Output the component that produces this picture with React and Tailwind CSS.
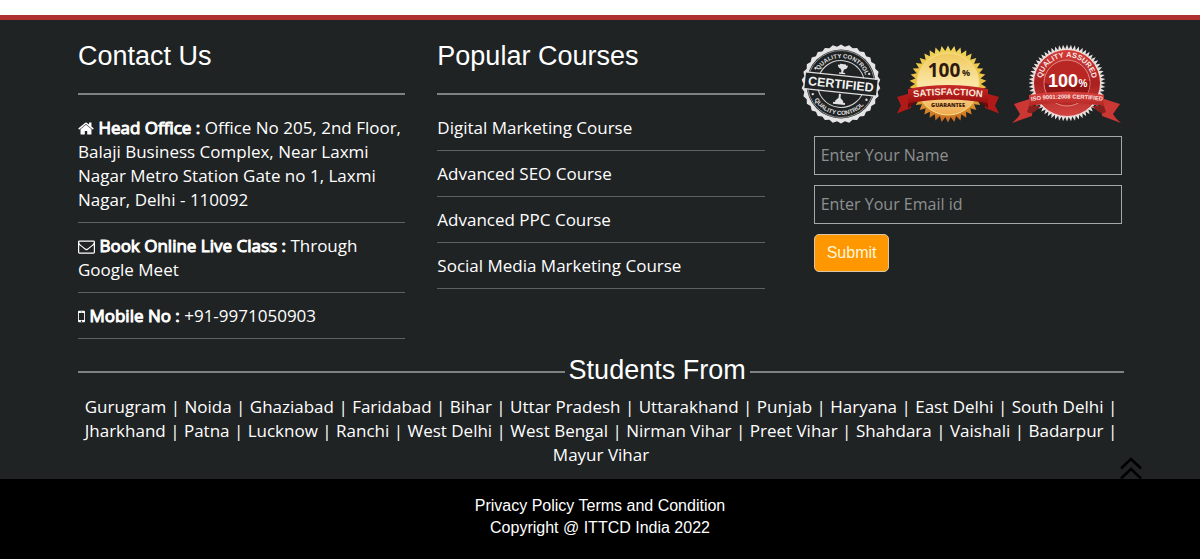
import { useId } from 'react'

const courses = [
  'Digital Marketing Course',
  'Advanced SEO Course',
  'Advanced PPC Course',
  'Social Media Marketing Course',
]

const places = [
  'Gurugram', 'Noida', 'Ghaziabad', 'Faridabad', 'Bihar', 'Uttar Pradesh', 'Uttarakhand',
  'Punjab', 'Haryana', 'East Delhi', 'South Delhi', 'Jharkhand', 'Patna', 'Lucknow', 'Ranchi',
  'West Delhi', 'West Bengal', 'Nirman Vihar', 'Preet Vihar', 'Shahdara', 'Vaishali',
  'Badarpur', 'Mayur Vihar',
]

// points of a toothed circle, used for the seal edges
function burst(cx, cy, outer, inner, teeth) {
  const points = []
  for (let i = 0; i < teeth * 2; i++) {
    const r = i % 2 ? inner : outer
    const a = (Math.PI * i) / teeth - Math.PI / 2
    points.push(`${(cx + r * Math.cos(a)).toFixed(2)},${(cy + r * Math.sin(a)).toFixed(2)}`)
  }
  return points.join(' ')
}

function HomeIcon() {
  return (
    <svg className="inline h-[17px] w-4 align-[-3px]" viewBox="64 0 1664 1792" fill="currentColor" aria-hidden="true">
      <path d="M1472 992v480q0 26-19 45t-45 19h-384v-384h-256v384h-384q-26 0-45-19t-19-45v-480q0-1 .5-3t.5-3l575-474 575 474q1 2 1 6zm223-69l-62 74q-8 9-21 11h-3q-13 0-21-7l-692-577-692 577q-12 8-24 7-13-2-21-11l-62-74q-8-10-7-23.5t11-21.5l719-599q32-26 76-26t76 26l244 204v-195q0-14 9-23t23-9h192q14 0 23 9t9 23v408l219 182q10 8 11 21.5t-7 23.5z" />
    </svg>
  )
}

function EnvelopeIcon() {
  return (
    <svg className="inline h-[17px] w-[17px] align-[-3px]" viewBox="0 0 1792 1792" fill="currentColor" aria-hidden="true">
      <path d="M1664 1504v-768q-32 36-69 66-268 206-426 338-51 43-83 67t-86.5 48.5-102.5 24.5h-2q-48 0-102.5-24.5t-86.5-48.5-83-67q-158-132-426-338-37-30-69-66v768q0 13 9.5 22.5t22.5 9.5h1472q13 0 22.5-9.5t9.5-22.5zm0-1051v-24.5l-.5-13-3-12.5-5.5-9-9-7.5-14-2.5h-1472q-13 0-22.5 9.5t-9.5 22.5q0 168 147 284 193 152 401 317 6 5 35 29.5t46 37.5 44.5 31.5 50.5 27.5 43 9h2q20 0 43-9t50.5-27.5 44.5-31.5 46-37.5 35-29.5q208-165 401-317 54-43 100.5-115.5t46.5-131.5zm128-37v1088q0 66-47 113t-113 47h-1472q-66 0-113-47t-47-113v-1088q0-66 47-113t113-47h1472q66 0 113 47t47 113z" />
    </svg>
  )
}

function MobileIcon() {
  return (
    <svg className="inline h-[17px] w-[7px] align-[-3px]" viewBox="512 0 768 1792" fill="currentColor" aria-hidden="true">
      <path d="M976 1408q0-33-23.5-56.5t-56.5-23.5-56.5 23.5-23.5 56.5 23.5 56.5 56.5 23.5 56.5-23.5 23.5-56.5zm208-160v-704q0-13-9.5-22.5t-22.5-9.5h-512q-13 0-22.5 9.5t-9.5 22.5v704q0 13 9.5 22.5t22.5 9.5h512q13 0 22.5-9.5t9.5-22.5zm-192-848q0-16-16-16h-160q-16 0-16 16t16 16h160q16 0 16-16zm288-16v1024q0 52-38 90t-90 38h-512q-52 0-90-38t-38-90v-1024q0-52 38-90t90-38h512q52 0 90 38t38 90z" />
    </svg>
  )
}

function CertifiedBadge() {
  const id = useId()
  return (
    <svg className="h-20 w-20 shrink-0" viewBox="0 0 80 80" role="img" aria-label="Certified, quality control">
      <defs>
        <path id={`${id}top`} d="M14 40a26 26 0 0 1 52 0" />
        <path id={`${id}bottom`} d="M9 40a31 31 0 0 0 62 0" />
      </defs>
      <polygon points={burst(40, 40, 39.5, 37.5, 30)} fill="#e4e4e4" />
      <circle cx="40" cy="40" r="34.5" fill="#202324" />
      <circle cx="40" cy="40" r="33.5" fill="none" stroke="#d5d5d5" strokeWidth="0.6" />
      <g transform="rotate(6 40 40)">
        <circle cx="40" cy="40" r="23.5" fill="none" stroke="#d5d5d5" strokeWidth="1" />
        <g fill="#e2e2e2" fontFamily="Liberation Sans, sans-serif" fontSize="6" fontWeight="700">
          <text textAnchor="middle"><textPath href={`#${id}top`} startOffset="50%">QUALITY CONTROL</textPath></text>
          <text textAnchor="middle"><textPath href={`#${id}bottom`} startOffset="50%">QUALITY CONTROL</textPath></text>
        </g>
        <path d="M37 20h6v1h2q0 3-3 4l-1 1.500v2h2V30h-6v-1.500h2v-2L38 25q-3-1-3-4h2z" fill="#e2e2e2" />
        <path d="M39 50h2v4l3 3v1.500h2v2H34v-2h2V57l3-3z" fill="#e2e2e2" />
        <circle cx="13" cy="27" r="1.200" fill="#e2e2e2" />
        <circle cx="67" cy="27" r="1.200" fill="#e2e2e2" />
        <circle cx="13" cy="53" r="1.200" fill="#e2e2e2" />
        <circle cx="67" cy="53" r="1.200" fill="#e2e2e2" />
        <path d="M4 32h72v16H4z" fill="#202324" />
        <path d="M4 31.500h72M4 48.500h72" stroke="#dedede" strokeWidth="1.200" />
        <text x="40" y="44.500" textAnchor="middle" fill="#f2f2f2" fontFamily="Liberation Sans, sans-serif" fontSize="12.500" fontWeight="700">CERTIFIED</text>
      </g>
    </svg>
  )
}

function SatisfactionBadge() {
  const id = useId()
  return (
    <svg className="h-20 w-[107px] shrink-0" viewBox="0 0 107 80" role="img" aria-label="100% satisfaction guarantee">
      <defs>
        <linearGradient id={`${id}gold`} x1="0" y1="0" x2="0" y2="1">
          <stop offset="0" stopColor="#f0d65c" />
          <stop offset="0.600" stopColor="#e8b93c" />
          <stop offset="1" stopColor="#c9641d" />
        </linearGradient>
        <linearGradient id={`${id}face`} x1="0" y1="0" x2="0" y2="1">
          <stop offset="0" stopColor="#f0c95c" />
          <stop offset="0.500" stopColor="#fbe6a6" />
          <stop offset="1" stopColor="#f0a94e" />
        </linearGradient>
        <linearGradient id={`${id}red`} x1="0" y1="0" x2="0" y2="1">
          <stop offset="0" stopColor="#c92a27" />
          <stop offset="1" stopColor="#98100f" />
        </linearGradient>
        <path id={`${id}band`} d="M12 54.500Q55 47.500 98 54.500" />
      </defs>
      <polygon points={burst(55, 40, 38.5, 33, 38)} fill={`url(#${id}gold)`} />
      <circle cx="55" cy="40" r="31" fill={`url(#${id}face)`} stroke="#f7e08a" strokeWidth="1" />
      <text x="51" y="33" textAnchor="middle" fill="#2f1a0e" fontFamily="Open Sans, sans-serif" fontSize="19" fontWeight="700">100</text>
      <text x="73" y="32" textAnchor="middle" fill="#2f1a0e" fontFamily="Open Sans, sans-serif" fontSize="9" fontWeight="700">%</text>
      <path d="M4 53L18 49v15L4 69.500l4-8z" fill="#b01a19" />
      <path d="M106 53L92 49v15l14 5.500-4-8z" fill="#b01a19" />
      <path d="M15 45Q55 37 95 45v14.500Q55 51.500 15 59.500z" fill={`url(#${id}red)`} />
      <path d="M15 59.500v5l8-6.500zM95 59.500v5l-8-6.500z" fill="#6d0b0b" />
      <text textAnchor="middle" fill="#fbe9dc" fontFamily="Liberation Sans, sans-serif" fontSize="9.500" fontWeight="700">
        <textPath href={`#${id}band`} startOffset="50%">SATISFACTION</textPath>
      </text>
      <text x="55" y="63" textAnchor="middle" fill="#3c1b0b" fontFamily="Open Sans, sans-serif" fontSize="5.500" fontWeight="800">GUARANTEE</text>
    </svg>
  )
}

function QualityBadge() {
  const id = useId()
  return (
    <svg className="h-20 w-[109px] shrink-0" viewBox="0 0 109 80" role="img" aria-label="100% quality assured, ISO 9001:2008 certified">
      <defs>
        <linearGradient id={`${id}red`} x1="0" y1="0" x2="0" y2="1">
          <stop offset="0" stopColor="#d63c38" />
          <stop offset="0.500" stopColor="#a8201f" />
          <stop offset="1" stopColor="#d24440" />
        </linearGradient>
        <linearGradient id={`${id}band`} x1="0" y1="0" x2="0" y2="1">
          <stop offset="0" stopColor="#dc4541" />
          <stop offset="1" stopColor="#b32623" />
        </linearGradient>
        <path id={`${id}arc`} d="M33 51.500a25.500 25.500 0 1 1 44 0" />
        <path id={`${id}text`} d="M12 58Q55 51 98 58" />
      </defs>
      <polygon points={burst(55, 39, 38.5, 34, 60)} fill="#e6e0de" />
      <circle cx="55" cy="39" r="33.500" fill={`url(#${id}red)`} stroke="#f5e9e7" strokeWidth="0.800" />
      <circle cx="55" cy="39" r="23" fill="#b92725" stroke="#e9a19e" strokeWidth="0.800" />
      <path d="M32.500 39q16 5 24 2t21-4q1 15-12 21H44q-11-6-11.500-19z" fill="#8f1615" />
      <text textAnchor="middle" fill="#f8e7e5" fontFamily="Liberation Sans, sans-serif" fontSize="7.500" fontWeight="700">
        <textPath href={`#${id}arc`} startOffset="50%">QUALITY ASSURED</textPath>
      </text>
      <text x="51" y="43" textAnchor="middle" fill="#fff" fontFamily="Liberation Sans, sans-serif" fontSize="18" fontWeight="700">100</text>
      <text x="71" y="43" textAnchor="middle" fill="#fff" fontFamily="Liberation Sans, sans-serif" fontSize="10" fontWeight="700">%</text>
      <path d="M2 60l19-6-1 18-20 7q6-5 8-9z" fill="#cb3733" />
      <path d="M108 60l-19-6 1 18 19 7q-6-5-8-9z" fill="#cb3733" />
      <path d="M17 51Q55 44 92 51v11Q55 55 17 62z" fill={`url(#${id}band)`} />
      <path d="M17 62l-2 6q5 4 14-6zM92 62l2 6q-5 4-14-6z" fill="#86201e" />
      <text textAnchor="middle" fill="#fbe4e2" fontFamily="Liberation Sans, sans-serif" fontSize="5.800" fontWeight="700">
        <textPath href={`#${id}text`} startOffset="50%">ISO 9001:2008 CERTIFIED</textPath>
      </text>
    </svg>
  )
}

function ColumnTitle({ children }) {
  return (
    <h2 className="border-b-2 border-[#7d8283] py-5 font-['Liberation_Sans',sans-serif] text-[27px] leading-[33px]">
      {children}
    </h2>
  )
}

function Row({ children }) {
  return <li className="border-b border-[#5c6162] pt-[11px] pb-[10px]">{children}</li>
}

// regular cut thickened with a stroke, there is no bold cut on the site
function Label({ children }) {
  return <b className="font-normal [-webkit-text-stroke:1px_white]">{children}</b>
}

function EnquiryForm() {
  const field = 'h-[39px] w-full border border-[#a5a8a8] bg-transparent px-1.5 pb-0.5 text-base text-white placeholder-[#8d9091] outline-none'

  return (
    <form className="flex flex-col items-start gap-[10px] pt-3 pr-0.5 pl-[17px]" onSubmit={event => event.preventDefault()}>
      <input className={field} type="text" name="name" aria-label="Name" placeholder="Enter Your Name" />
      <input className={field} type="email" name="email" aria-label="Email" placeholder="Enter Your Email id" />
      <button
        type="submit"
        className="h-[38px] rounded-[5px] border border-[#d8c8a8] bg-[#ff9800] px-3 font-['Liberation_Sans',sans-serif] text-base text-[#fff6dc]"
      >
        Submit
      </button>
    </form>
  )
}

export default function App() {
  return (
    <footer className="pt-[15px] font-['Open_Sans',sans-serif] text-[17px] leading-6 text-white">
      <div className="relative border-t-[5px] border-[#b03030] bg-[#202324] pr-[76px] pb-3 pl-[78px]">
        <div className="grid grid-cols-3 gap-8">
          <section>
            <ColumnTitle>Contact Us</ColumnTitle>
            <ul className="pt-[10px]">
              <Row>
                <HomeIcon /> <Label>Head Office :</Label> Office No 205, 2nd Floor, Balaji Business Complex, Near Laxmi
                Nagar Metro Station Gate no 1, Laxmi Nagar, Delhi - 110092
              </Row>
              <Row>
                <EnvelopeIcon /> <Label>Book Online Live Class :</Label> Through Google Meet
              </Row>
              <Row>
                <MobileIcon /> <Label>Mobile No :</Label> +91-9971050903
              </Row>
            </ul>
          </section>

          <section>
            <ColumnTitle>Popular Courses</ColumnTitle>
            <ul className="pt-[10px]">
              {courses.map(course => (
                <Row key={course}>
                  <a href="#courses">{course}</a>
                </Row>
              ))}
            </ul>
          </section>

          <section className="pt-6">
            <div className="flex gap-3 pl-1">
              <CertifiedBadge />
              <SatisfactionBadge />
              <QualityBadge />
            </div>
            <EnquiryForm />
          </section>
        </div>

        <section>
          <div className="flex items-center gap-1 pt-[14px] pb-2">
            <span className="mt-1 h-0.5 flex-13 bg-[#7d8283]" />
            <h2 className="font-['Liberation_Sans',sans-serif] text-[27px] leading-[34px]">Students From</h2>
            <span className="mt-1 h-0.5 flex-10 bg-[#7d8283]" />
          </div>
          <p className="text-center">{places.join(' | ')}</p>
        </section>

        <a href="#top" aria-label="Back to top" className="absolute right-[58px] bottom-0">
          <svg className="h-[22px] w-[22px]" viewBox="0 0 22 22" fill="none" stroke="#000" strokeWidth="2.500">
            <path d="M1 11.500l10-9.500 10 9.500M1 21.500l10-9.500 10 9.500" />
          </svg>
        </a>
      </div>

      <div className="bg-black pt-4 pb-[21px] text-center font-['Liberation_Sans',sans-serif] text-base leading-[22px]">
        <p>
          <a href="#privacy">Privacy Policy</a> <a href="#terms">Terms and Condition</a>
        </p>
        <p>Copyright @ ITTCD India 2022</p>
      </div>
    </footer>
  )
}
